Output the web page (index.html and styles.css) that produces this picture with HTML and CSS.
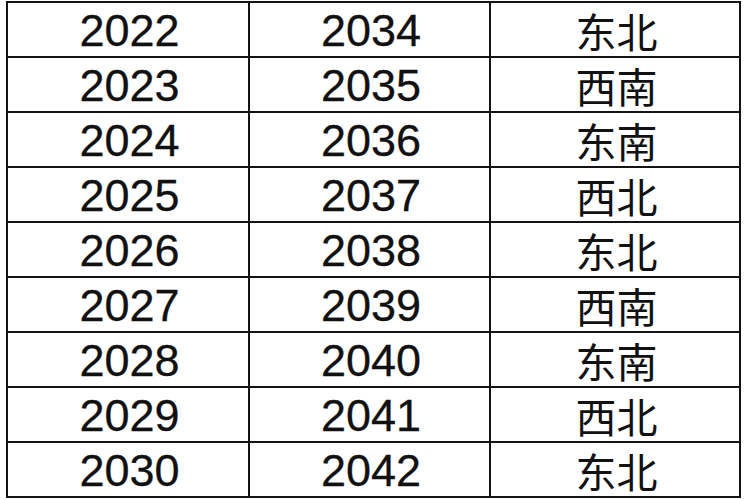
FILE: index.html
```html
<!DOCTYPE html>
<html lang="zh">
<head>
<meta charset="utf-8">
<link rel="stylesheet" href="styles.css">
</head>
<body>
<table class="grid">
<colgroup><col class="c1"><col class="c2"><col class="c3"></colgroup>
<tbody>
<tr><td>2022</td><td>2034</td><td class="cn">东北</td></tr>
<tr><td>2023</td><td>2035</td><td class="cn">西南</td></tr>
<tr><td>2024</td><td>2036</td><td class="cn">东南</td></tr>
<tr><td>2025</td><td>2037</td><td class="cn">西北</td></tr>
<tr><td>2026</td><td>2038</td><td class="cn">东北</td></tr>
<tr><td>2027</td><td>2039</td><td class="cn">西南</td></tr>
<tr><td>2028</td><td>2040</td><td class="cn">东南</td></tr>
<tr><td>2029</td><td>2041</td><td class="cn">西北</td></tr>
<tr><td>2030</td><td>2042</td><td class="cn">东北</td></tr>
</tbody>
</table>
</body>
</html>
```
FILE: styles.css
```css
html, body {
  margin: 0;
  padding: 0;
  background: #ffffff;
}
body {
  width: 750px;
  height: 500px;
  overflow: hidden;
  padding: 1px 0 0 6px;
  box-sizing: border-box;
}
.grid {
  border-collapse: collapse;
  table-layout: fixed;
  width: 735px;
  font-family: "Liberation Sans", Arial, "Noto Sans CJK SC", sans-serif;
  color: #111;
}
.c1 { width: 242px; }
.c2 { width: 241px; }
.c3 { width: 250px; }
.grid td {
  border: 2px solid #141414;
  height: 52px;
  padding: 1px 0 0 3px;
  text-align: center;
  vertical-align: middle;
  font-size: 45px;
  line-height: 1;
  -webkit-text-stroke: 0.3px #111;
}
.grid td.cn {
  font-family: "Noto Sans CJK SC", sans-serif;
  font-size: 41px;
  font-weight: 400;
  -webkit-text-stroke: 0;
}
```
